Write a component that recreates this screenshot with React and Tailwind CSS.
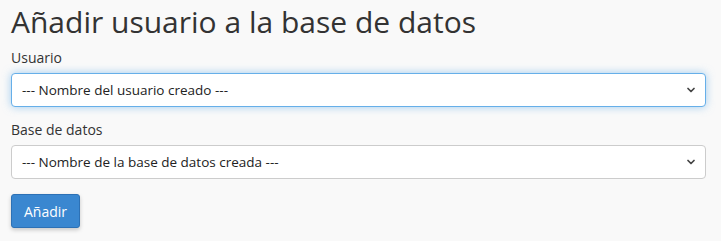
import { ChevronDown } from 'lucide-react';

const SelectField = ({ label, placeholder, focused, className = '' }) => {
    return (
        <div className={className}>
            <label className="block text-[14px] leading-[20px] text-[#333]">{label}</label>
            <div className="relative mt-[5px]">
                <select
                    defaultValue=""
                    className={
                        focused
                            ? "w-full h-[34px] appearance-none rounded-[4px] border border-[#66afe9] bg-white pl-[10px] pr-8 text-[13.5px] text-[#222] outline-none shadow-[0_0_8px_rgba(102,175,233,0.6)]"
                            : "w-full h-[34px] appearance-none rounded-[4px] border border-[#ccc] bg-white pl-[10px] pr-8 text-[13.5px] text-[#222] outline-none"
                    }
                >
                    <option value="">{placeholder}</option>
                </select>
                <ChevronDown
                    className="pointer-events-none absolute right-[9px] top-1/2 -translate-y-1/2 w-[12px] h-[12px] text-[#444]"
                    strokeWidth={3.5}
                />
            </div>
        </div>
    );
};

export default function App() {
    return (
        <div className="min-h-[241px] bg-[#f9f9f9] pl-[11px] pr-[15px] pt-[5px] font-['Open_Sans',sans-serif]">
            <h1 className="text-[30px] leading-[33px] font-normal text-[#333]">Añadir usuario a la base de datos</h1>
            <SelectField
                className="mt-[10px]"
                label="Usuario"
                placeholder="--- Nombre del usuario creado ---"
                focused
            />
            <SelectField
                className="mt-[13px]"
                label="Base de datos"
                placeholder="--- Nombre de la base de datos creada ---"
            />
            <button className="mt-[15px] h-[34px] px-[12px] rounded-[3px] border border-[#2d71b5] bg-[#3a87d0] text-[14px] text-white shadow-[0_2px_4px_rgba(0,0,0,0.2)]">
                Añadir
            </button>
        </div>
    );
}
